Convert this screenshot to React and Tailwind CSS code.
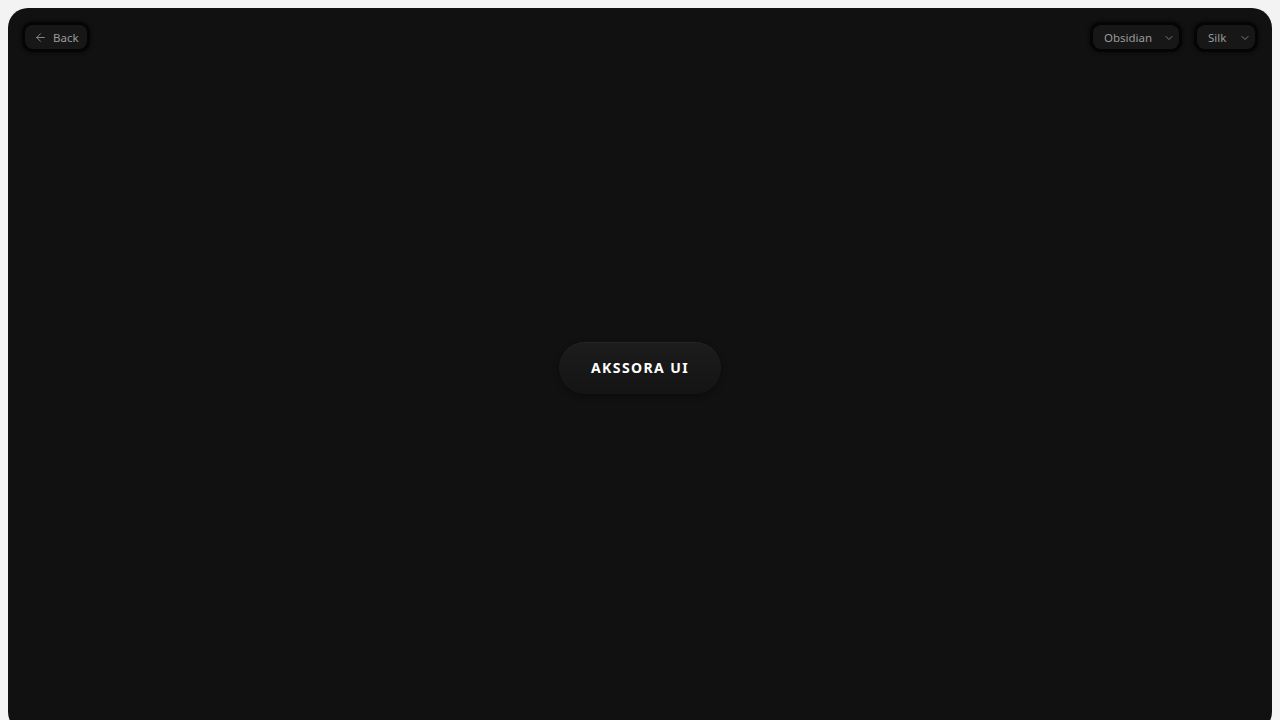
import { ArrowLeft, ChevronDown } from 'lucide-react'

// small dark control used in the top bar
function ToolbarButton({ children, className = '' }) {
  return (
    <button
      className={`flex h-[24px] items-center rounded-[8px] bg-[#171717] pt-[1px] text-[11.5px] text-[#9a9a9a] shadow-[0_0_0_3px_#050505,0_0_4px_3px_rgba(0,0,0,0.7)] ${className}`}
    >
      {children}
    </button>
  )
}

function Select({ label, width }) {
  return (
    <ToolbarButton className={`${width} justify-between pl-[11px] pr-[4px]`}>
      <span>{label}</span>
      <ChevronDown size={12} strokeWidth={1.75} className="text-[#8a8a8a]" />
    </ToolbarButton>
  )
}

export default function App() {
  return (
    <div
      className="h-screen overflow-hidden bg-[#f3f3f3] px-2 pt-2"
      style={{ fontFamily: '"Noto Sans", "Open Sans", sans-serif' }}
    >
      <main className="relative flex h-[724px] flex-col rounded-[20px] bg-[#111111]">
        <header className="flex items-center justify-between px-[17px] pt-[17px]">
          <ToolbarButton className="w-[62px] gap-[6px] pl-[9px]">
            <ArrowLeft size={13} strokeWidth={1.75} className="-mt-[1px] text-[#8a8a8a]" />
            <span>Back</span>
          </ToolbarButton>
          <div className="flex items-center gap-[18px]">
            <Select label="Obsidian" width="w-[86px]" />
            <Select label="Silk" width="w-[58px]" />
          </div>
        </header>

        <div className="flex flex-1 items-start justify-center pt-[293px]">
          <button
            className="flex h-[52px] w-[162px] items-center justify-center rounded-full bg-gradient-to-b from-[#1c1c1c] to-[#141414] pb-[1px] text-[14px] font-bold tracking-[0.1em] text-white shadow-[0_1px_0_rgba(255,255,255,0.04)_inset,0_2px_6px_rgba(0,0,0,0.35)]"
          >
            AKSSORA UI
          </button>
        </div>
      </main>
    </div>
  )
}
